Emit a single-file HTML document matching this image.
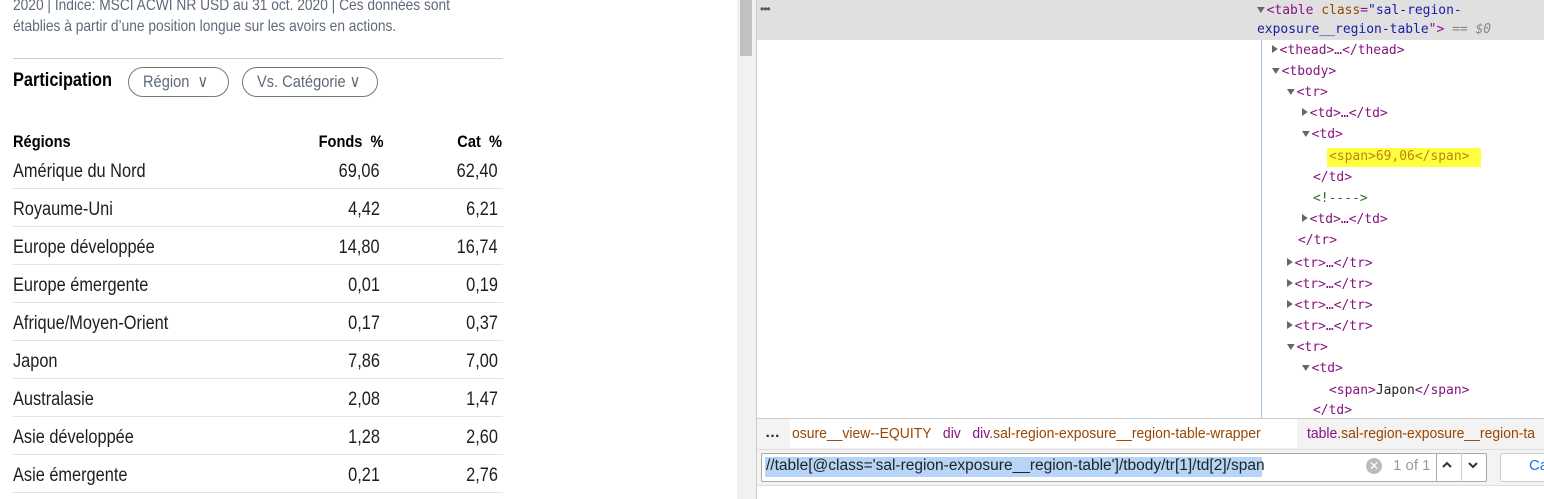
<!DOCTYPE html>
<html><head><meta charset="utf-8"><style>
*{margin:0;padding:0;box-sizing:border-box}
body{width:1544px;height:499px;overflow:hidden;background:#fff;position:relative;font-family:"Liberation Sans",sans-serif}
.c{position:absolute;white-space:nowrap;transform-origin:0 50%;transform:scaleX(.86)}
.r{transform-origin:100% 50%}
.g{color:#5e6a78;font-size:16px}
.t{color:#1e1e1e;font-size:19px}
.b{font-weight:bold;color:#000;font-size:17px}
.line{position:absolute;left:13px;width:490px;height:1px;background:#e2e2e2}
.pill{position:absolute;height:30px;border:1.5px solid #777;border-radius:15px;top:67px}
.m{position:absolute;font-family:"DejaVu Sans Mono",monospace;font-size:13.5px;white-space:nowrap;color:#881280;transform:scaleX(.96);transform-origin:0 50%}
.at{color:#994500}.av{color:#1a1aa6}.tx{color:#222}.gr{color:#888}.cm{color:#236e25}
.tri{display:inline-block;width:0;height:0;margin-right:2px;vertical-align:1px}
.tr{border-left:6px solid #666;border-top:4px solid transparent;border-bottom:4px solid transparent}
.td{border-top:6px solid #666;border-left:4px solid transparent;border-right:4px solid transparent}
</style></head><body>
<div class="c g" style="left:13px;top:-3px">2020 | Indice: MSCI ACWI NR USD au 31 oct. 2020 | Ces données sont</div>
<div class="c g" style="left:13px;top:18px">établies à partir d’une position longue sur les avoirs en actions.</div>
<div class="line" style="top:58px;background:#ccc"></div>
<div class="c b" style="left:13px;top:70px;font-size:19px">Participation</div>
<div class="pill" style="left:128px;width:101px"></div>
<div class="c g" style="left:143px;top:72px;font-size:17px">Région &nbsp;∨</div>
<div class="pill" style="left:242px;width:136px"></div>
<div class="c g" style="left:257px;top:72px;font-size:17px">Vs. Catégorie ∨</div>
<div class="c b" style="left:13px;top:132px">Régions</div>
<div class="c b r" style="right:1160px;top:132px">Fonds &nbsp;%</div>
<div class="c b r" style="right:1042px;top:132px">Cat &nbsp;%</div>
<div id="rows"></div>
<script>
var d=[["Amérique du Nord","69,06","62,40"],["Royaume-Uni","4,42","6,21"],["Europe développée","14,80","16,74"],["Europe émergente","0,01","0,19"],["Afrique/Moyen-Orient","0,17","0,37"],["Japon","7,86","7,00"],["Australasie","2,08","1,47"],["Asie développée","1,28","2,60"],["Asie émergente","0,21","2,76"]];
var h="";d.forEach(function(r,i){var y=161+i*38;h+='<div class="c t" style="left:13px;top:'+y+'px">'+r[0]+'</div><div class="c t r" style="right:1164px;top:'+y+'px">'+r[1]+'</div><div class="c t r" style="right:1046px;top:'+y+'px">'+r[2]+'</div><div class="line" style="top:'+(y+27)+'px"></div>';});
document.getElementById("rows").innerHTML=h;
</script>
<div style="position:absolute;left:737px;top:0;width:19px;height:499px;background:#f1f1f1"></div>
<div style="position:absolute;left:740px;top:0;width:12px;height:56px;background:#c1c1c1"></div>
<div style="position:absolute;left:756px;top:0;width:1px;height:499px;background:#ccc"></div>
<div style="position:absolute;left:757px;top:0;width:787px;height:40px;background:#e0e0e0"></div>
<div style="position:absolute;left:760px;top:2px;font-size:12px;color:#555;letter-spacing:-1px">•••</div>
<div style="position:absolute;left:1261px;top:40px;width:1px;height:378px;background:#a8c2e8"></div>
<div class="m" style="left:1257px;top:2px"><span class="tri td"></span>&lt;table <span class="at">class</span>=<span class="av">"sal-region-</span></div>
<div class="m" style="left:1257px;top:21px"><span class="av">exposure__region-table</span>"&gt; <span class="gr">== <i>$0</i></span></div>
<div class="m" style="left:1272px;top:42px"><span class="tri tr"></span>&lt;thead&gt;…&lt;/thead&gt;</div>
<div class="m" style="left:1272px;top:63px"><span class="tri td"></span>&lt;tbody&gt;</div>
<div class="m" style="left:1287px;top:84px"><span class="tri td"></span>&lt;tr&gt;</div>
<div class="m" style="left:1302px;top:105px"><span class="tri tr"></span>&lt;td&gt;…&lt;/td&gt;</div>
<div class="m" style="left:1302px;top:126px"><span class="tri td"></span>&lt;td&gt;</div>
<div style="position:absolute;left:1327px;top:148px;width:154px;height:19px;background:#ffff40"></div>
<div class="m" style="left:1329px;top:148px;color:#b8860b">&lt;span&gt;69,06&lt;/span&gt;</div>
<div class="m" style="left:1313px;top:169px">&lt;/td&gt;</div>
<div class="m cm" style="left:1313px;top:190px">&lt;!----&gt;</div>
<div class="m" style="left:1302px;top:211px"><span class="tri tr"></span>&lt;td&gt;…&lt;/td&gt;</div>
<div class="m" style="left:1298px;top:232px">&lt;/tr&gt;</div>
<div class="m" style="left:1287px;top:255px"><span class="tri tr"></span>&lt;tr&gt;…&lt;/tr&gt;</div>
<div class="m" style="left:1287px;top:276px"><span class="tri tr"></span>&lt;tr&gt;…&lt;/tr&gt;</div>
<div class="m" style="left:1287px;top:297px"><span class="tri tr"></span>&lt;tr&gt;…&lt;/tr&gt;</div>
<div class="m" style="left:1287px;top:318px"><span class="tri tr"></span>&lt;tr&gt;…&lt;/tr&gt;</div>
<div class="m" style="left:1287px;top:339px"><span class="tri td"></span>&lt;tr&gt;</div>
<div class="m" style="left:1302px;top:360px"><span class="tri td"></span>&lt;td&gt;</div>
<div class="m" style="left:1329px;top:382px">&lt;span&gt;<span class="tx">Japon</span>&lt;/span&gt;</div>
<div class="m" style="left:1313px;top:402px">&lt;/td&gt;</div>
<div style="position:absolute;left:757px;top:418px;width:787px;height:31px;background:#f3f3f3;border-top:1px solid #ccc"></div>
<div style="position:absolute;left:790px;top:419px;width:507px;height:29px;background:#fff"></div>
<div style="position:absolute;left:765px;top:424px;font-size:15px;font-weight:bold;color:#222">…</div>
<div style="position:absolute;left:792px;top:425px;font-size:15px;white-space:nowrap;color:#994500;transform:scaleX(.93);transform-origin:0 50%"><span>osure__view--EQUITY</span> &nbsp; <span style="color:#881280">div</span> &nbsp; <span style="color:#881280">div</span>.sal-region-exposure__region-table-wrapper</div>
<div style="position:absolute;left:1307px;top:425px;font-size:15px;white-space:nowrap;color:#994500;transform:scaleX(.93);transform-origin:0 50%"><span style="color:#881280">table</span>.sal-region-exposure__region-ta</div>
<div style="position:absolute;left:757px;top:449px;width:787px;height:37px;background:#f3f3f3;border-top:1px solid #ddd;border-bottom:1px solid #ddd"></div>
<div style="position:absolute;left:761px;top:453px;width:726px;height:29px;background:#fff;border:1px solid #aaa;border-radius:2px"></div>
<div style="position:absolute;left:765px;top:457px;height:20px;width:497px;background:#b7d5f6"></div>
<div style="position:absolute;left:766px;top:457px;font-size:15.5px;white-space:nowrap;color:#222">//table[@class='sal-region-exposure__region-table']/tbody/tr[1]/td[2]/span</div>
<div style="position:absolute;left:1366px;top:458px;width:16px;height:16px;border-radius:8px;background:#bbb;color:#fff;font-size:12px;text-align:center;line-height:16px">✕</div>
<div style="position:absolute;left:1393px;top:457px;font-size:15px;color:#999">1 of 1</div>
<div style="position:absolute;left:1436px;top:453px;width:1px;height:29px;background:#aaa"></div>
<div style="position:absolute;left:1461px;top:453px;width:1px;height:29px;background:#ccc"></div>
<svg style="position:absolute;left:1441px;top:461px" width="12" height="8"><path d="M2 6 L6 2 L10 6" fill="none" stroke="#333" stroke-width="2"/></svg>
<svg style="position:absolute;left:1467px;top:461px" width="12" height="8"><path d="M2 2 L6 6 L10 2" fill="none" stroke="#333" stroke-width="2"/></svg>
<div style="position:absolute;left:1500px;top:453px;width:60px;height:29px;background:#fff;border:1px solid #ccc;border-radius:3px"></div>
<div style="position:absolute;left:1529px;top:457px;font-size:15px;color:#1a73e8">Ca</div>
</body></html>
